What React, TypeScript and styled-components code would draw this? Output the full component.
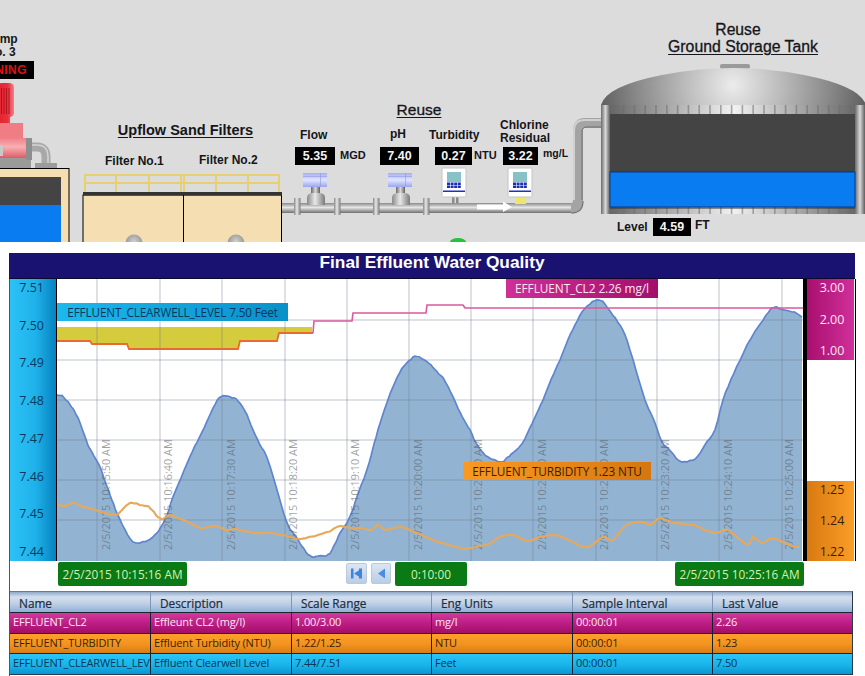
import React from "react";
import styled, { createGlobalStyle } from "styled-components";

const Global = createGlobalStyle`
  html, body { margin: 0; padding: 0; background: #fff; overflow: hidden; }
  body { font-family: "Liberation Sans", Arial, sans-serif; }
`;

const Page = styled.div`
  width: 865px;
  height: 676px;
  overflow: hidden;
  display: flex;
  flex-direction: column;
`;

/* ---------- process mimic: a free canvas ---------- */
const Mimic = styled.div`
  position: relative;
  flex: 0 0 242px;
  background: #dcdcdc;
  overflow: hidden;
  svg { display: block; }
`;

const Label = styled.div<{ $x: number; $y: number; $size?: number; $w?: number; $center?: boolean }>`
  position: absolute;
  left: ${(p) => p.$x}px;
  top: ${(p) => p.$y}px;
  ${(p) => (p.$w ? `width: ${p.$w}px;` : "")}
  ${(p) => (p.$center ? "text-align: center;" : "")}
  font-size: ${(p) => p.$size ?? 12}px;
  line-height: 13px;
  font-weight: 700;
  color: #15151a;
  white-space: nowrap;
`;

const Heading = styled.div<{ $x: number; $y: number; $w: number; $size?: number; $bold?: boolean }>`
  position: absolute;
  left: ${(p) => p.$x}px;
  top: ${(p) => p.$y}px;
  width: ${(p) => p.$w}px;
  text-align: center;
  font-size: ${(p) => p.$size ?? 15}px;
  line-height: 17px;
  font-weight: ${(p) => (p.$bold ? 700 : 400)};
  color: #15151a;
  white-space: nowrap;
  -webkit-text-stroke: ${(p) => (p.$bold ? 0 : 0.3)}px #15151a;
  & > u { text-underline-offset: 2px; }
`;

const Reading = styled.div<{ $x: number; $y: number; $w: number }>`
  position: absolute;
  left: ${(p) => p.$x}px;
  top: ${(p) => p.$y}px;
  width: ${(p) => p.$w}px;
  height: 18px;
  line-height: 18px;
  background: #000;
  color: #f4f4f4;
  font-size: 12.5px;
  font-weight: 700;
  text-align: center;
`;

const Status = styled.div`
  position: absolute;
  left: -39px;
  top: 61px;
  width: 73px;
  height: 18px;
  line-height: 18px;
  background: #000;
  color: #e01010;
  font-size: 12px;
  font-weight: 700;
  text-align: center;
  letter-spacing: 0.4px;
`;

const Valve = ({ x }: { x: number }) => (
  <g transform={`translate(${x} 0)`}>
    <rect x={8} y={185} width={9} height={9} fill="url(#stem)" />
    <rect x={0} y={173} width={24} height={14} fill="url(#act)" />
    <rect x={0} y={176} width={24} height={1} fill="#a4abee" />
    <rect x={17} y={173} width={1} height={14} fill="#8f96e0" opacity={0.6} />
    <path d="M4 205 V198 Q4 193 10 193 H16 Q22 193 22 198 V205 Z" fill="url(#pipeV)" />
  </g>
);

const Analyzer = ({ x }: { x: number }) => {
  const cells = [0, 1, 2, 3];
  return (
    <g transform={`translate(${x} 0)`}>
      <rect x={0} y={168} width={24} height={29} rx={1.5} fill="#fff" stroke="#c4c4c4" strokeWidth={1} />
      <rect x={5} y={172} width={14} height={10} fill="#86c2c6" />
      {cells.map((c) =>
        [0, 1].map((r) => (
          <rect key={`${c}-${r}`} x={5 + c * 3.6} y={182.5 + r * 3} width={3} height={2.5} fill="#1b2fb0" />
        ))
      )}
      <rect x={1} y={190.5} width={22} height={1.5} fill="#1f2fc8" />
    </g>
  );
};

const flanges = [297, 337, 376, 426];

const MimicDrawing = () => (
  <svg width={865} height={242} viewBox="0 0 865 242">
    <defs>
      <linearGradient id="pipeH" x1="0" y1="0" x2="0" y2="1">
        <stop offset="0" stopColor="#8a8a8a" />
        <stop offset=".45" stopColor="#e6e6e6" />
        <stop offset="1" stopColor="#6f6f6f" />
      </linearGradient>
      <linearGradient id="pipeV" x1="0" y1="0" x2="1" y2="0">
        <stop offset="0" stopColor="#8a8a8a" />
        <stop offset=".45" stopColor="#e8e8e8" />
        <stop offset="1" stopColor="#7a7a7a" />
      </linearGradient>
      <linearGradient id="stem" x1="0" y1="0" x2="1" y2="0">
        <stop offset="0" stopColor="#6a6a6a" />
        <stop offset=".5" stopColor="#d8d8d8" />
        <stop offset="1" stopColor="#5e5e5e" />
      </linearGradient>
      <linearGradient id="act" x1="0" y1="0" x2="0" y2="1">
        <stop offset="0" stopColor="#a6aff0" />
        <stop offset=".5" stopColor="#dfe5ff" />
        <stop offset="1" stopColor="#9ca5ee" />
      </linearGradient>
      <linearGradient id="motor" x1="0" y1="0" x2="1" y2="0">
        <stop offset="0" stopColor="#e2202c" />
        <stop offset=".65" stopColor="#e8303c" />
        <stop offset="1" stopColor="#f0808a" />
      </linearGradient>
      <linearGradient id="volute" x1="0" y1="0" x2="0" y2="1">
        <stop offset="0" stopColor="#f08088" />
        <stop offset=".45" stopColor="#f7b0b2" />
        <stop offset="1" stopColor="#e05a66" />
      </linearGradient>
      <radialGradient id="dome" gradientUnits="userSpaceOnUse" cx={733} cy={85} r={135}>
        <stop offset="0" stopColor="#ececec" />
        <stop offset=".35" stopColor="#bcbcbc" />
        <stop offset=".75" stopColor="#848484" />
        <stop offset="1" stopColor="#5e5e5e" />
      </radialGradient>
      <linearGradient id="band" x1="0" y1="0" x2="1" y2="0">
        <stop offset="0" stopColor="#5c5c5c" />
        <stop offset=".5" stopColor="#f2f2f2" />
        <stop offset="1" stopColor="#5c5c5c" />
      </linearGradient>
      <radialGradient id="wheel" cx=".5" cy=".4" r=".6">
        <stop offset="0" stopColor="#cfcfcf" />
        <stop offset="1" stopColor="#8e8e8e" />
      </radialGradient>
    </defs>

    {/* pump */}
    <path d="M-4 113 V87 Q-4 83 2 83 H9 Q14 83 14 88 V113 Q14 116 10 117 V123 H-4 Z" fill="url(#motor)" />
    {[1, 3.5, 6, 8.5].map((v) => (
      <rect key={v} x={v} y={88} width={1} height={26} fill="#b01420" />
    ))}
    <rect x={-4} y={123} width={27} height={16} fill="#f07c84" />
    <rect x={-4} y={138} width={30} height={20} fill="url(#volute)" />
    <rect x={-4} y={158} width={35} height={10} fill="#9a9a9a" />
    <rect x={0} y={145} width={3} height={11} fill="#c9c9c9" />
    <path d="M31 147 H37 Q46 147 46 157 V164" fill="none" stroke="#a8a8a8" strokeWidth={9} />
    <path d="M31 145 H37 Q48 145 48 157 V164" fill="none" stroke="#dedede" strokeWidth={1.5} opacity={0.8} />
    <rect x={26} y={138} width={6} height={22} fill="#8e8e8e" />
    <rect x={35} y={163} width={22} height={5} fill="#9c9c9c" />

    {/* clearwell */}
    <rect x={-2} y={168.5} width={71} height={76} fill="#f4deb2" stroke="#000" strokeWidth={1} />
    <rect x={-2} y={177} width={63} height={28} fill="#444" />
    <rect x={-2} y={205} width={63} height={38} fill="#0a7cf2" />

    {/* filters */}
    <g fill="none" stroke="#e6d070" strokeWidth={2}>
      <path d="M84 175 H280 M84 183 H280" />
      {[85, 116, 149, 181, 184, 216, 248, 279].map((v) => (
        <path key={v} d={`M${v} 175 V192`} />
      ))}
    </g>
    <rect x={83} y={195} width={198.5} height={48} fill="#f4deb2" stroke="#000" strokeWidth={1} />
    <rect x={83} y={192} width={199} height={3.5} fill="#333" />
    <rect x={183} y={195} width={1} height={47} fill="#000" />
    <circle cx={134} cy={243} r={8.5} fill="url(#wheel)" />
    <circle cx={236} cy={243} r={8.5} fill="url(#wheel)" />

    {/* reuse line */}
    <path d="M282 208 H570 Q578 208 578 200 V130 Q578 123 585 123 H602" fill="none" stroke="#a4a4a4" strokeWidth={10} />
    <rect x={282} y={203} width={289} height={10} fill="url(#pipeH)" />
    <path d="M574 200 V130 Q574 120 585 120 H602" fill="none" stroke="#e2e2e2" strokeWidth={2} opacity={0.7} />
    <path d="M582 200 V132 Q582 127 587 127 H602" fill="none" stroke="#6f6f6f" strokeWidth={1} />
    <path d="M571 213 Q583 213 583 201" fill="none" stroke="#6f6f6f" strokeWidth={1.2} />
    {flanges.map((v) => (
      <rect key={v} x={v - 3} y={198} width={6.5} height={17} fill="url(#pipeV)" />
    ))}
    <Valve x={303} />
    <Valve x={388} />
    <rect x={452} y={197} width={2.5} height={6} fill="#8a8a8a" />
    <rect x={456} y={197} width={2.5} height={6} fill="#8a8a8a" />
    <Analyzer x={442} />
    <rect x={515} y={197} width={11} height={7} fill="#ece66c" />
    <Analyzer x={508} />
    <path d="M477 204.5 H503 V201.5 L512 207 L503 212 V209.5 H477 Z" fill="#fff" />

    {/* ground storage tank */}
    <rect x={720} y={64} width={30} height={5} rx={2} fill="#9a9a9a" />
    <path d="M601 105 Q606 86 662 75 Q733 61 804 75 Q860 86 866 105 Z" fill="url(#dome)" />
    <rect x={601} y={105} width={265} height={109} fill="url(#band)" />
    {Array.from({ length: 24 }, (_, i) => (
      <rect key={i} x={612 + i * 10.8} y={105} width={1.6} height={109} fill="#6c6c6c" opacity={0.55} />
    ))}
    <rect x={601} y={105} width={9} height={109} fill="url(#stem)" />
    <rect x={855} y={105} width={10} height={109} fill="url(#stem)" />
    <rect x={610} y={114} width={245} height={58} fill="#444" />
    <rect x={610} y={172} width={245} height={35} fill="#0a7cf2" stroke="#0b2a66" strokeWidth={0.8} />
    <rect x={610} y={207.5} width={245} height={1} fill="#333" />
    <ellipse cx={458} cy={242} rx={8} ry={4} fill="#22c43a" />
  </svg>
);

/* ---------- trend panel ---------- */
const Panel = styled.section`
  margin: 11px 0 0 9px;
  width: 846px;
  flex: 1;
  box-sizing: border-box;
  border-left: 1px solid #46586e;
  font-family: "Open Sans", "Liberation Sans", sans-serif;
`;

const TitleBar = styled.h1`
  margin: 0;
  height: 26px;
  margin-left: -1px;
  background: #1a1270;
  border-bottom: 1px solid #0a0a30;
  box-sizing: border-box;
  color: #fff;
  font: 700 17.3px/19px "Liberation Sans", Arial, sans-serif;
  text-align: center;
`;

const ChartRow = styled.div`
  display: grid;
  grid-template-columns: 47px 746px 4px 47px;
  height: 282px;
  border-right: 1px solid #000;
  width: 845px;
`;

const LeftAxis = styled.div`
  display: flex;
  flex-direction: column;
  justify-content: space-between;
  align-items: flex-end;
  padding: 0 12px 0 0;
  box-sizing: border-box;
  background: linear-gradient(90deg, #2cc2f6 0%, #1fb2ea 55%, #0682bf 100%);
  border-right: 1px solid #000;
  color: #0a3a5e;
  font-size: 12.5px;
  line-height: 18px;
`;

const PlotWrap = styled.div`
  position: relative;
  background: #fff;
  svg { display: block; }
`;

const Separator = styled.div`
  background: #000;
`;

const RightAxis = styled.div`
  display: flex;
  flex-direction: column;
  background: #fff;
`;

const Spacer = styled.div`
  flex: 1;
`;

const tones = {
  magenta: {
    axis: "linear-gradient(90deg, #a80f6e 0%, #d0309a 100%)",
    tag: "linear-gradient(90deg, #cf2f96 0%, #a30f6c 100%)",
    row: "linear-gradient(180deg, #d23a9a 0%, #c02088 45%, #a20e68 100%)",
    text: "#fbe6f4",
  },
  orange: {
    axis: "linear-gradient(90deg, #d87a10 0%, #fb9d28 100%)",
    tag: "linear-gradient(90deg, #fa9a24 0%, #d67610 100%)",
    row: "linear-gradient(180deg, #fba02c 0%, #f59420 50%, #d87c14 100%)",
    text: "#3c1f00",
  },
  blue: {
    axis: "linear-gradient(90deg, #2cc2f6, #0682bf)",
    tag: "linear-gradient(90deg, #1cb8ee 0%, #0a90c9 100%)",
    row: "linear-gradient(180deg, #2cc4f6 0%, #18b4ea 55%, #0a96d2 100%)",
    text: "#08365a",
  },
};
type Tone = keyof typeof tones;

const AxisBlock = styled.div<{ $tone: Tone; $h: number }>`
  height: ${(p) => p.$h}px;
  display: flex;
  flex-direction: column;
  justify-content: space-between;
  align-items: center;
  padding: 0 0 0 3px;
  box-sizing: border-box;
  background: ${(p) => tones[p.$tone].axis};
  color: ${(p) => tones[p.$tone].text};
  font-size: 12.5px;
  line-height: 18px;
`;

const Tag = styled.div<{ $tone: Tone; $x: number; $y: number; $w: number; $h: number; $size: number }>`
  position: absolute;
  left: ${(p) => p.$x}px;
  top: ${(p) => p.$y}px;
  width: ${(p) => p.$w}px;
  height: ${(p) => p.$h}px;
  line-height: ${(p) => p.$h}px;
  text-align: center;
  background: ${(p) => tones[p.$tone].tag};
  color: ${(p) => tones[p.$tone].text};
  font-size: ${(p) => p.$size}px;
  letter-spacing: -0.1px;
  white-space: nowrap;
`;

const Footer = styled.div`
  height: 30px;
  padding: 0 0 0 48px;
  display: grid;
  grid-template-columns: 129px 159px 21px 4px 20px 4px 72px 208px 129px;
  align-items: start;
`;

const Chip = styled.div`
  height: 24px;
  line-height: 24px;
  border-radius: 2px;
  background: #0a7a14;
  color: #d4f2b8;
  font-size: 11.8px;
  text-align: center;
  white-space: nowrap;
  margin-top: 1px;
`;

const NavButton = styled.div`
  height: 21px;
  margin-top: 2px;
  box-sizing: border-box;
  border: 1px solid #b9c9de;
  border-radius: 2px;
  background: linear-gradient(180deg, #dbe6f4 0%, #b8cde6 100%);
  display: flex;
  align-items: center;
  justify-content: center;
`;

const Table = styled.div`
  width: 843px;
  border-top: 1px solid #5b7ea6;
  border-bottom: 1px solid #2a3a4a;
  border-right: 1px solid #2a3a4a;
  box-sizing: border-box;
`;

const GridRow = styled.div`
  display: grid;
  grid-template-columns: 140px 141px 140px 141px 140px 1fr;
`;

const HeadCell = styled.div`
  height: 20px;
  line-height: 22px;
  padding-left: 9px;
  background: linear-gradient(180deg, #8fa9c8 0%, #d3dfee 25%, #c2d2e6 55%, #8fb0d6 100%);
  border-left: 1px solid #7f97b5;
  color: #1c2c40;
  font-size: 11.8px;
  font-weight: 500;
  -webkit-text-stroke: 0.2px #1c2c40;
  white-space: nowrap;
  overflow: hidden;
  &:first-child { border-left: none; }
`;

const BodyRow = styled(GridRow)<{ $tone: Tone }>`
  height: 20.5px;
  background: ${(p) => tones[p.$tone].row};
  color: ${(p) => tones[p.$tone].text};
  border-top: 1px solid #1c2430;
  box-sizing: border-box;
`;

const Cell = styled.div`
  padding-left: 3px;
  font-size: 11px;
  letter-spacing: -0.15px;
  line-height: 18px;
  border-left: 1px solid #14202e;
  white-space: nowrap;
  overflow: hidden;
  &:first-child { border-left: none; }
`;

/* ---------- chart data (page coordinates) ---------- */
const level: [number, number][] = [
  [57, 395], [62, 396], [68, 402], [73, 409], [78, 418], [83, 431], [88, 445], [94, 456], [100, 467], [106, 484],
  [112, 500], [117, 513], [125, 530], [133, 542], [143, 542], [150, 539], [157, 533], [162, 525], [167, 515],
  [173, 497], [181, 478], [190, 457], [197, 442], [204, 428], [213, 408], [219, 398], [223, 396], [230, 397],
  [236, 399], [242, 406], [247, 415], [253, 430], [260, 445], [267, 457], [277, 490], [287, 523], [294, 534],
  [300, 543], [306, 552], [312, 557], [318, 556], [325, 556], [330, 553], [336, 542], [340, 533], [350, 517],
  [358, 494], [367, 470], [373, 448], [378, 430], [387, 402], [397, 378], [404, 366], [411, 359], [417, 356],
  [424, 360], [431, 365], [437, 372], [443, 378], [451, 393], [458, 408], [464, 420], [470, 430], [476, 443],
  [483, 453], [490, 458], [497, 461], [502, 462], [508, 457], [513, 453], [522, 444], [530, 428], [536, 415],
  [543, 400], [551, 380], [560, 360], [568, 340], [575, 325], [582, 312], [590, 304], [597, 300], [603, 302],
  [610, 311], [618, 322], [625, 335], [633, 360], [645, 400], [654, 420], [662, 442], [670, 450], [676, 458],
  [682, 462], [690, 461], [697, 457], [707, 442], [715, 430], [723, 400], [731, 380], [740, 360], [751, 338],
  [763, 320], [770, 310], [775, 307], [781, 309], [790, 311], [796, 313], [802, 317],
];

const turbidity: [number, number][] = [
  [57, 504], [63, 506], [68, 505], [75, 503], [83, 507], [92, 509], [100, 512], [108, 514], [116, 515], [122, 510],
  [128, 504], [134, 503], [140, 505], [147, 506], [152, 510], [158, 517], [163, 519], [170, 515], [178, 518],
  [188, 522], [200, 528], [208, 527], [216, 526], [226, 530], [236, 529], [243, 531], [256, 533], [270, 533],
  [282, 535], [290, 537], [298, 539], [306, 538], [318, 535], [330, 531], [340, 526], [350, 528], [362, 528],
  [371, 530], [378, 525], [385, 530], [394, 528], [403, 527], [412, 531], [420, 534], [428, 538], [438, 542],
  [446, 544], [456, 547], [466, 549], [478, 546], [487, 545], [500, 537], [513, 535], [527, 541], [540, 537],
  [553, 535], [562, 537], [573, 542], [588, 547], [603, 537], [613, 540], [626, 525], [643, 522], [650, 525],
  [660, 518], [673, 523], [693, 525], [705, 530], [717, 533], [728, 530], [747, 545], [753, 537], [762, 543],
  [773, 538], [788, 545], [800, 547],
];

const stepOrange = "M57 341 H90 L92 344 H127 L129 349 H238 L240 341 H277 L279 333 H313";
const stepPink = "M313 333 L314 321 H352 L353 313 H426 L427 305 H463 L465 308 H803";
const yellow = "M57 327 H312 V333 H279 L277 341 H240 L238 349 H129 L127 344 H92 L90 341 H57 Z";

/* Catmull-Rom resampling with a little sensor noise, so the traces read as measured data. */
const roughen = (pts: [number, number][], noise: number): [number, number][] => {
  const out: [number, number][] = [];
  for (let i = 0; i < pts.length - 1; i++) {
    const p0 = pts[Math.max(i - 1, 0)];
    const p1 = pts[i];
    const p2 = pts[i + 1];
    const p3 = pts[Math.min(i + 2, pts.length - 1)];
    for (let s = 0; s < 3; s++) {
      const t = s / 3;
      const f = (a: number, b: number, c: number, d: number) =>
        0.5 * (2 * b + (c - a) * t + (2 * a - 5 * b + 4 * c - d) * t * t + (3 * b - a - 3 * c + d) * t * t * t);
      const x = f(p0[0], p1[0], p2[0], p3[0]);
      const y = f(p0[1], p1[1], p2[1], p3[1]);
      out.push([x, y + noise * Math.sin(x * 1.7) * Math.cos(x * 0.61)]);
    }
  }
  out.push(pts[pts.length - 1]);
  return out;
};

const toLine = (pts: [number, number][]) =>
  pts.map(([x, y], i) => `${i ? "L" : "M"}${x.toFixed(1)} ${y.toFixed(1)}`).join(" ");

const levelLine = toLine(roughen(level, 0.6));
const turbidityLine = toLine(roughen(turbidity, 0.5));

const gridX = [97, 160, 222, 285, 347, 409, 471, 533, 596, 657, 719, 782];
const gridY = [320, 360, 400, 440, 480, 520];
const ticks: [number, string][] = [
  [105.5, "10:15:50"], [168, "10:16:40"], [231, "10:17:30"], [293, "10:18:20"], [355, "10:19:10"], [417.5, "10:20:00"],
  [478, "10:20:50"], [542, "10:21:40"], [604, "10:22:30"], [665, "10:23:20"], [728, "10:24:10"], [789, "10:25:00"],
];

const Chart = () => (
  <svg width={746} height={282} viewBox="57 279 746 282">
    <path d={yellow} fill="#d4cc3c" />
    <path d={`${levelLine} L802 561 L57 561 Z`} fill="#92b4d2" />
    {gridX.map((x) => (
      <line key={x} x1={x} x2={x} y1={279} y2={561} stroke="#6e7a90" strokeOpacity={0.38} strokeWidth={1.2} />
    ))}
    {gridY.map((y) => (
      <line key={y} x1={57} x2={803} y1={y} y2={y} stroke="#6e7a90" strokeOpacity={0.3} strokeWidth={1.5} />
    ))}
    <path d={levelLine} fill="none" stroke="#5f85cf" strokeWidth={1.7} />
    {ticks.map(([x, t]) => (
      <text
        key={x}
        transform={`rotate(-90 ${x + 4} 550)`}
        x={x + 4}
        y={550}
        fontFamily="Open Sans, sans-serif"
        fontSize={10.9}
        fill="#5a5f66"
        fillOpacity={0.6}
      >
        {`2/5/2015 ${t} AM`}
      </text>
    ))}
    <path d={turbidityLine} fill="none" stroke="#e8a858" strokeWidth={2.1} strokeLinejoin="round" />
    <path d={stepOrange} fill="none" stroke="#ea6a30" strokeWidth={1.8} />
    <path d={stepPink} fill="none" stroke="#dc5aa0" strokeWidth={1.6} />
  </svg>
);

const columns = ["Name", "Description", "Scale Range", "Eng Units", "Sample Interval", "Last Value"];
const rows: { tone: Tone; cells: string[] }[] = [
  { tone: "magenta", cells: ["EFFLUENT_CL2", "Effleunt CL2 (mg/l)", "1.00/3.00", "mg/l", "00:00:01", "2.26"] },
  { tone: "orange", cells: ["EFFLUENT_TURBIDITY", "Effluent Turbidity (NTU)", "1.22/1.25", "NTU", "00:00:01", "1.23"] },
  { tone: "blue", cells: ["EFFLUENT_CLEARWELL_LEVEL", "Effluent Clearwell Level", "7.44/7.51", "Feet", "00:00:01", "7.50"] },
];

export default function App() {
  return (
    <Page>
      <Global />
      <Mimic>
        <MimicDrawing />
        <Label $x={-24} $y={33} $w={50} $center>Pump<br />No. 3</Label>
        <Status>RUNNING</Status>

        <Heading $x={100} $y={122} $w={171} $bold $size={14.5}><u>Upflow Sand Filters</u></Heading>
        <Label $x={105} $y={155}>Filter No.1</Label>
        <Label $x={199} $y={154}>Filter No.2</Label>

        <Heading $x={389} $y={101} $w={60} $size={15.5}><u>Reuse</u></Heading>
        <Label $x={300} $y={129}>Flow</Label>
        <Label $x={390} $y={128}>pH</Label>
        <Label $x={429} $y={129}>Turbidity</Label>
        <Label $x={500} $y={119}>Chlorine<br />Residual</Label>
        <Reading $x={295} $y={147} $w={40}>5.35</Reading>
        <Reading $x={380} $y={147} $w={39}>7.40</Reading>
        <Reading $x={435} $y={147} $w={37}>0.27</Reading>
        <Reading $x={503} $y={147} $w={35}>3.22</Reading>
        <Label $x={340} $y={149} $size={11}>MGD</Label>
        <Label $x={474} $y={149} $size={11}>NTU</Label>
        <Label $x={543} $y={147} $size={10.5}>mg/L</Label>

        <Heading $x={688} $y={21} $w={100} $size={15.7}>Reuse</Heading>
        <Heading $x={663} $y={38} $w={160} $size={15.8}><u>Ground Storage Tank</u></Heading>
        <Label $x={617} $y={221}>Level</Label>
        <Reading $x={653} $y={218} $w={38}>4.59</Reading>
        <Label $x={695} $y={219}>FT</Label>
      </Mimic>

      <Panel>
        <TitleBar>Final Effluent Water Quality</TitleBar>
        <ChartRow>
          <LeftAxis>
            {["7.51", "7.50", "7.49", "7.48", "7.47", "7.46", "7.45", "7.44"].map((v) => (
              <span key={v}>{v}</span>
            ))}
          </LeftAxis>
          <PlotWrap>
            <Chart />
            <Tag $tone="blue" $x={0} $y={24} $w={231} $h={18} $size={11.7}>EFFLUENT_CLEARWELL_LEVEL 7.50 Feet</Tag>
            <Tag $tone="magenta" $x={449} $y={0} $w={152} $h={19} $size={11.9}>EFFLUENT_CL2 2.26 mg/l</Tag>
            <Tag $tone="orange" $x={406} $y={183} $w={188} $h={18} $size={11.8}>EFFLUENT_TURBIDITY 1.23 NTU</Tag>
          </PlotWrap>
          <Separator />
          <RightAxis>
            <AxisBlock $tone="magenta" $h={81}>
              <span>3.00</span><span>2.00</span><span>1.00</span>
            </AxisBlock>
            <Spacer />
            <AxisBlock $tone="orange" $h={80}>
              <span>1.25</span><span>1.24</span><span>1.22</span>
            </AxisBlock>
          </RightAxis>
        </ChartRow>
        <Footer>
          <Chip>2/5/2015 10:15:16 AM</Chip>
          <span />
          <NavButton>
            <svg width={13} height={13} viewBox="0 0 13 13">
              <path d="M1 1.5 H3.5 V11.5 H1 Z M12 1.5 V11.5 L4 6.5 Z M9 1.5 H12 V11.5 H9 Z" fill="#3f84da" />
            </svg>
          </NavButton>
          <span />
          <NavButton>
            <svg width={11} height={13} viewBox="0 0 11 13">
              <path d="M9 1.5 V11.5 L2 6.5 Z" fill="#4a8ee0" />
            </svg>
          </NavButton>
          <span />
          <Chip>0:10:00</Chip>
          <span />
          <Chip>2/5/2015 10:25:16 AM</Chip>
        </Footer>
        <Table>
          <GridRow>
            {columns.map((c) => (
              <HeadCell key={c}>{c}</HeadCell>
            ))}
          </GridRow>
          {rows.map((r) => (
            <BodyRow key={r.tone} $tone={r.tone}>
              {r.cells.map((c) => (
                <Cell key={c + r.tone}>{c}</Cell>
              ))}
            </BodyRow>
          ))}
        </Table>
      </Panel>
    </Page>
  );
}
